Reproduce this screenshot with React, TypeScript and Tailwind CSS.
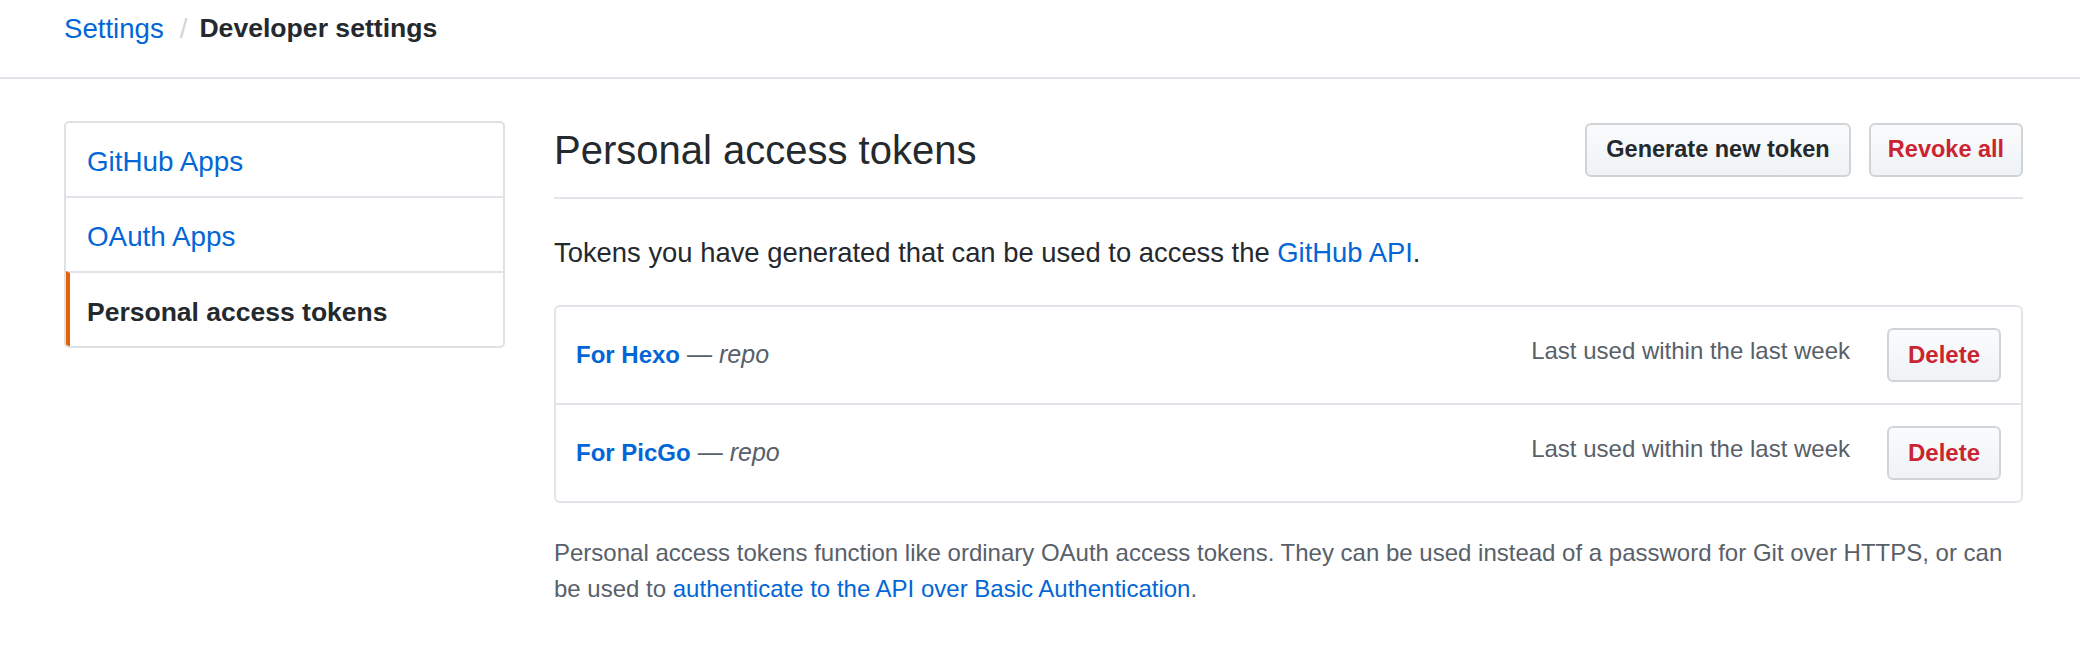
export default function App() {
  const tokens = [
    { name: "For Hexo", scope: "repo" },
    { name: "For PicGo", scope: "repo" },
  ];

  return (
    <div className="w-full min-h-[646px] bg-white text-[#24292e] font-['Liberation_Sans',Arial,sans-serif]">
      <div className="h-[79px] border-b-2 border-[#e1e4e8] pl-[64px] pt-[8px]">
        <div className="flex items-center text-[27.6px] leading-[1.5]">
          <a className="text-[#0366d6]">Settings</a>
          <span className="ml-[16px] mr-[12px] text-[#d1d5da]">/</span>
          <span className="font-bold text-[26.6px]">Developer settings</span>
        </div>
      </div>

      <div className="flex gap-[49px] pl-[64px] pr-[57px] pt-[42px]">
        <div className="w-[441px] shrink-0 self-start rounded-[5px] border-2 border-[#dfe2e5] text-[27.8px]">
          <div className="h-[73px] flex items-center px-[21px] pt-[5px] text-[#0366d6]">GitHub Apps</div>
          <div className="h-[75px] flex items-center px-[21px] pt-[5px] border-t-2 border-[#e1e4e8] text-[#0366d6]">
            OAuth Apps
          </div>
          <div className="h-[75px] flex items-center pl-[17px] pr-[21px] pt-[6px] border-t-2 border-[#e1e4e8] border-l-4 border-l-[#e36209] rounded-bl-[3px] font-bold text-[26.5px]">
            Personal access tokens
          </div>
        </div>

        <div className="flex-1 min-w-0">
          <div className="flex items-center justify-between h-[78px] pb-[18px] border-b-2 border-[#e1e4e8]">
            <h2 className="text-[40px] font-normal leading-none">Personal access tokens</h2>
            <div className="flex gap-[18px]">
              <button className="w-[266px] h-[54px] rounded-[6px] border-2 border-[#d1d4d7] bg-gradient-to-b from-[#fafbfc] to-[#eff3f6] text-[23.5px] font-bold text-[#24292e]">
                Generate new token
              </button>
              <button className="w-[154px] h-[54px] rounded-[6px] border-2 border-[#d1d4d7] bg-gradient-to-b from-[#fafbfc] to-[#eff3f6] text-[23.5px] font-bold text-[#cb2431]">
                Revoke all
              </button>
            </div>
          </div>

          <p className="mt-[33px] text-[27.4px] leading-[1.5]">
            Tokens you have generated that can be used to access the{" "}
            <a className="text-[#0366d6]">GitHub API</a>.
          </p>

          <div className="mt-[32px] rounded-[6px] border-2 border-[#e1e4e8]">
            {tokens.map((t, i) => (
              <div
                key={t.name}
                className={
                  "flex items-center justify-between px-[20px] py-[21px] " +
                  (i > 0 ? "border-t-2 border-[#e1e4e8]" : "")
                }
              >
                <div className="flex items-baseline gap-[7px] text-[24px]">
                  <a className="font-bold text-[#0366d6]">{t.name}</a>
                  <span className="text-[#586069] text-[25px]">—</span>
                  <em className="text-[#586069] text-[25px]">{t.scope}</em>
                </div>
                <div className="flex items-center">
                  <span className="text-[24px] text-[#586069] pb-[8px] mr-[37px]">
                    Last used within the last week
                  </span>
                  <button className="w-[114px] h-[54px] rounded-[6px] border-2 border-[#d1d4d7] bg-gradient-to-b from-[#fafbfc] to-[#eff3f6] text-[24px] font-bold text-[#cb2431]">
                    Delete
                  </button>
                </div>
              </div>
            ))}
          </div>

          <p className="mt-[32px] text-[24px] leading-[36px] text-[#586069]">
            Personal access tokens function like ordinary OAuth access tokens. They can be used instead of a
            password for Git over HTTPS, or can be used to{" "}
            <a className="text-[#0366d6]">authenticate to the API over Basic Authentication</a>.
          </p>
        </div>
      </div>
    </div>
  );
}
